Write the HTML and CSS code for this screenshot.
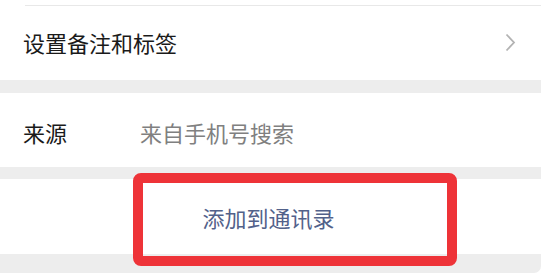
FILE: index.html
```html
<!DOCTYPE html>
<html lang="zh-CN">
<head>
<meta charset="utf-8">
<link rel="stylesheet" href="styles.css">
</head>
<body>
<div class="page">
  <section class="group first">
    <div class="divider"></div>
    <div class="row">
      <span class="label">设置备注和标签</span>
      <svg class="chevron" width="11" height="19" viewBox="0 0 11 19"><path d="M1.5 1.5 L9 9.5 L1.5 17.5" fill="none" stroke="#b3b3b3" stroke-width="1.8"/></svg>
    </div>
  </section>
  <div class="gap"></div>
  <section class="group source">
    <div class="row">
      <span class="label key">来源</span>
      <span class="value">来自手机号搜索</span>
    </div>
  </section>
  <div class="gap small"></div>
  <section class="group action">
    <span class="link">添加到通讯录</span>
  </section>
  <div class="gap bottom"></div>
  <div class="highlight"></div>
</div>
</body>
</html>
```
FILE: styles.css
```css
html, body {
  margin: 0;
  padding: 0;
  background: #ffffff;
}
body {
  font-family: "Noto Sans CJK SC", "Noto Sans", sans-serif;
  width: 551px;
  height: 277px;
  overflow: hidden;
}
.page {
  position: relative;
  width: 541px;
}
.group {
  background: #ffffff;
}
.first {
  height: 80px;
  display: flex;
  flex-direction: column;
}
.divider {
  margin-top: 5px;
  margin-left: 25px;
  height: 1px;
  background: #e8e8e8;
}
.row {
  display: flex;
  align-items: center;
  padding: 0 24px 0 23px;
}
.first .row {
  flex: 1;
  justify-content: space-between;
  padding-bottom: 2px;
}
.label {
  font-size: 22px;
  color: #1a1a1a;
  line-height: 1;
}
.chevron {
  display: block;
  margin-right: 1px;
}
.gap {
  height: 13px;
  background: #ededed;
}
.gap.small {
  height: 12px;
}
.gap.bottom {
  height: 19px;
  border-bottom-right-radius: 7px;
}
.source {
  height: 74px;
  display: flex;
  align-items: center;
}
.source .row {
  padding-top: 4px;
}
.key {
  width: 117px;
}
.value {
  font-size: 22px;
  line-height: 1;
  color: #808080;
}
.action {
  height: 75px;
  display: flex;
  align-items: center;
  justify-content: center;
}
.link {
  font-size: 22px;
  line-height: 1;
  color: #52618a;
  padding-top: 1px;
  margin-right: 4px;
}
.highlight {
  position: absolute;
  left: 133px;
  top: 173px;
  width: 304px;
  height: 73px;
  border: 10px solid #ee3338;
  border-radius: 8px;
  box-sizing: content-box;
}
```
